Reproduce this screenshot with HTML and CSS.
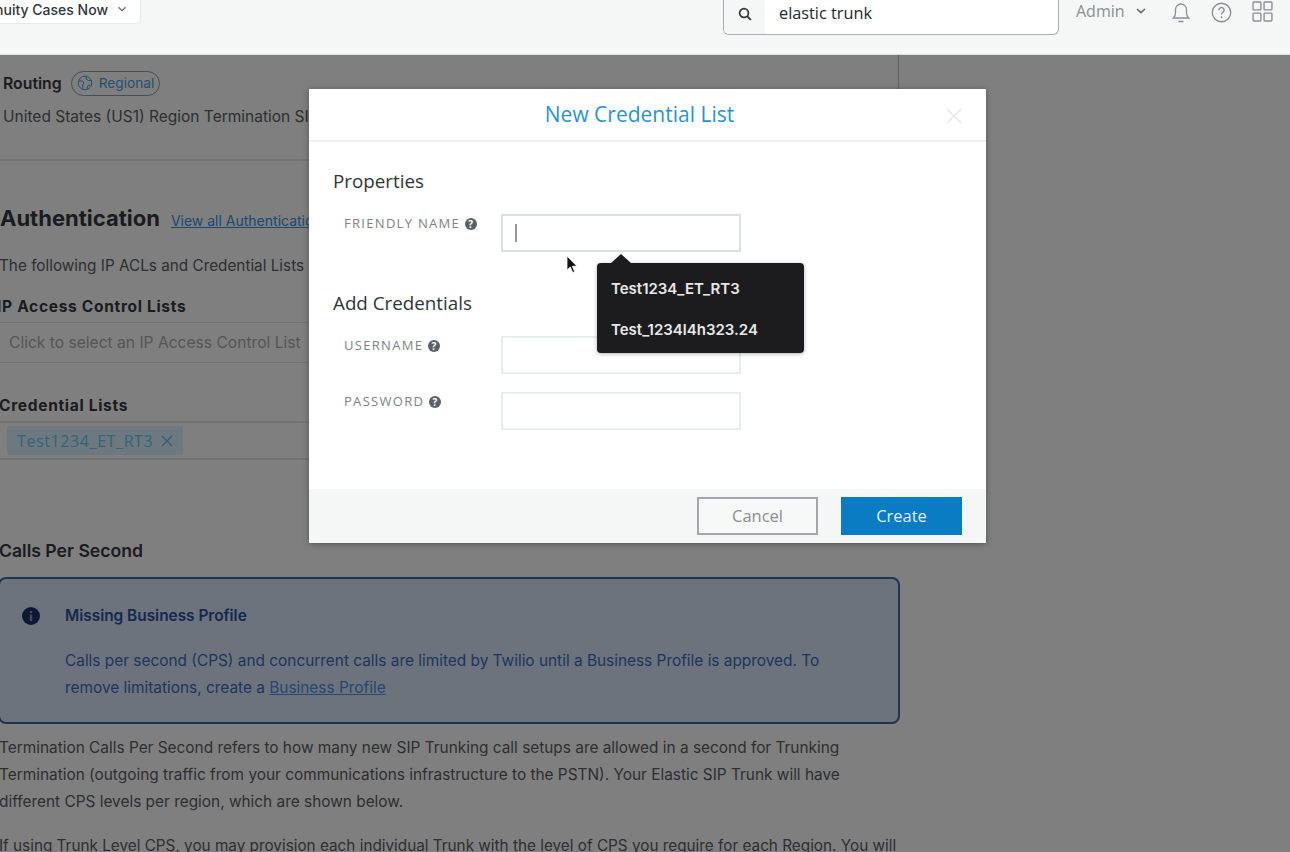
FILE: index.html
```html
<!DOCTYPE html>
<html lang="en">
<head>
    <meta charset="UTF-8">
    <title>New Credential List</title>
    <link rel="stylesheet" href="styles.css">
</head>
<body>
    <header class="topbar">
        <button type="button" class="cases-btn">
            <span>Continuity Cases Now</span>
            <svg width="10" height="6" viewBox="0 0 10 6"><path d="M1.500 1.200 5 4.600l3.500-3.400" fill="none" stroke="#667" stroke-width="1.300"/></svg>
        </button>
        <div class="search">
            <span class="search-icon">
                <svg width="16" height="16" viewBox="0 0 16 16"><circle cx="7" cy="7" r="4.400" fill="none" stroke="#33393f" stroke-width="1.700"/><path d="m10.300 10.300 3.600 3.600" stroke="#33393f" stroke-width="1.900"/></svg>
            </span>
            <span class="search-text">elastic trunk</span>
        </div>
        <div class="account">
            <span>Admin</span>
            <svg width="10" height="6" viewBox="0 0 10 6"><path d="M1 1l4 3.600L9 1" fill="none" stroke="#666c72" stroke-width="1.600"/></svg>
        </div>
        <svg class="top-icon bell" width="18" height="21" viewBox="0 0 18 21"><path d="M1.500 16c1.500-1.500 2-3 2-5.500V7.500a5.500 5.500 0 0 1 11 0v3c0 2.500.5 4 2 5.500Z M6.500 19.500h5" fill="none" stroke="#8a8f94" stroke-width="1.300"/></svg>
        <svg class="top-icon help" width="21" height="21" viewBox="0 0 20 20"><circle cx="10" cy="10" r="8.800" fill="none" stroke="#8a8f94" stroke-width="1.300"/><path d="M7.500 7.800a2.500 2.500 0 1 1 3.800 2.100c-.9.600-1.300 1-1.300 2.100" fill="none" stroke="#8a8f94" stroke-width="1.300"/><circle cx="10" cy="14.500" r=".9" fill="#8a8f94"/></svg>
        <svg class="top-icon grid" width="21" height="21" viewBox="0 0 20 20"><g fill="none" stroke="#8a8f94" stroke-width="1.300"><rect x="1" y="1" width="7.500" height="7.500" rx=".8"/><rect x="11.500" y="1" width="7.500" height="7.500" rx=".8"/><rect x="1" y="11.500" width="7.500" height="7.500" rx=".8"/><rect x="11.500" y="11.500" width="7.500" height="7.500" rx=".8"/></g></svg>
    </header>

    <main class="content">
        <div class="routing-row">
            <b>Routing</b>
            <span class="region-pill">
                <svg width="16" height="16" viewBox="0 0 16 16"><g fill="none" stroke="#4a9fe0" stroke-width="1"><circle cx="8" cy="8" r="6.800"/><path d="M2 6h3.500l1.500 2-1.500 2 .5 3.500M9.500 1.500 9 4l2.500 1.500h3M10 14l.5-3 3-1"/></g></svg>
                Regional
            </span>
        </div>
        <p class="routing-text">United States (US1) Region Termination SIP URI</p>
        <hr class="divider">

        <div class="auth-head">
            <h2>Authentication</h2>
            <a href="#">View all Authentication</a>
        </div>
        <p class="auth-text">The following IP ACLs and Credential Lists</p>

        <h4 class="field-title ip-title">IP Access Control Lists</h4>
        <div class="placeholder">Click to select an IP Access Control List</div>

        <h4 class="field-title cred-title">Credential Lists</h4>
        <div class="chips">
            <span class="chip">Test1234_ET_RT3
                <svg width="12" height="12" viewBox="0 0 12 12"><path d="m1 1 10 10M11 1 1 11" stroke="#66b8e0" stroke-width="1.200"/></svg>
            </span>
        </div>

        <h3 class="cps-title">Calls Per Second</h3>
        <div class="notice">
            <svg class="notice-icon" width="18" height="18" viewBox="0 0 18 18"><circle cx="9" cy="9" r="9" fill="#1b3365"/><circle cx="9" cy="5" r="1.300" fill="#8a94a6"/><rect x="7.800" y="7.500" width="2.400" height="6.500" fill="#8a94a6"/></svg>
            <div>
                <h5>Missing Business Profile</h5>
                <p>Calls per second (CPS) and concurrent calls are limited by Twilio until a Business Profile is approved. To remove limitations, create a <a href="#">Business Profile</a></p>
            </div>
        </div>
        <p class="body-text">Termination Calls Per Second refers to how many new SIP Trunking call setups are allowed in a second for Trunking Termination (outgoing traffic from your communications infrastructure to the PSTN). Your Elastic SIP Trunk will have different CPS levels per region, which are shown below.</p>
        <p class="body-text body-last">If using Trunk Level CPS, you may provision each individual Trunk with the level of CPS you require for each Region. You will</p>
    </main>

    <div class="backdrop"></div>

    <section class="modal">
        <div class="modal-head">
            <h2>New Credential List</h2>
            <svg class="modal-close" width="16" height="16" viewBox="0 0 16 16"><path d="m1 1 14 14M15 1 1 15" stroke="#e6e8e8" stroke-width="1.500"/></svg>
        </div>
        <div class="modal-body">
            <h3>Properties</h3>
            <div class="form-row">
                <label>FRIENDLY NAME <i class="qmark">?</i></label>
                <div class="input input-active"><span class="caret"></span></div>
            </div>
            <h3 class="add-head">Add Credentials</h3>
            <div class="form-row">
                <label>USERNAME <i class="qmark">?</i></label>
                <div class="input"></div>
            </div>
            <div class="form-row password-row">
                <label>PASSWORD <i class="qmark">?</i></label>
                <div class="input"></div>
            </div>
        </div>
        <div class="modal-foot">
            <button type="button" class="btn-cancel">Cancel</button>
            <button type="button" class="btn-create">Create</button>
        </div>
        <div class="suggest">
            <div>Test1234_ET_RT3</div>
            <div>Test_1234l4h323.24</div>
        </div>
        <svg class="cursor" width="12" height="19" viewBox="0 0 12 19"><path d="M1 1v14l3.300-3 2.400 5.500 2-.9-2.400-5.300H11Z" fill="#111" stroke="#fff" stroke-width=".8"/></svg>
    </section>
</body>
</html>
```

FILE: styles.css
```css
* { box-sizing: border-box; }

html, body {
    margin: 0;
    height: 852px;
    overflow: hidden;
}

body {
    background-color: #fff;
    color: #35383e;
    font-family: 'Inter', sans-serif;
    position: relative;
}

/* top bar sits above the dimmed page */
.topbar {
    position: relative;
    z-index: 3;
    height: 55px;
    background-color: #f5f7f7;
    border-bottom: 1px solid #dcdfe0;
    display: flex;
    align-items: flex-start;
}

.cases-btn {
    flex: none;
    width: 180px;
    height: 30px;
    margin: -6px 0 0 -39px;
    padding: 0 13px 0 0;
    background: #fff;
    border: 1px solid #e7eaea;
    border-radius: 5px;
    display: flex;
    align-items: center;
    justify-content: flex-end;
    gap: 9px;
    font-family: 'Inter', sans-serif;
    font-size: 14px;
    font-weight: 500;
    color: #30363c;
    white-space: nowrap;
}

.cases-btn svg { flex: none; }

.search {
    flex: none;
    width: 336px;
    height: 35px;
    margin: 0 0 0 582px;
    background: #fff;
    border: 1px solid #a9aeb2;
    border-top: 0;
    border-radius: 0 0 6px 6px;
    display: flex;
    overflow: hidden;
}

.search-icon {
    width: 41px;
    background: #f5f7f7;
    display: flex;
    align-items: center;
    justify-content: center;
    padding-bottom: 7px;
}

.search-text {
    padding: 2px 0 0 14px;
    font-family: 'Open Sans', sans-serif;
    font-size: 16.300px;
    color: #22272c;
}

.account {
    margin: 0 0 0 17px;
    height: 22px;
    display: flex;
    align-items: center;
    gap: 11px;
    font-family: 'Open Sans', sans-serif;
    font-size: 16px;
    color: #8a8f94;
}

.top-icon { flex: none; }
.bell { margin: 2px 0 0 26px; }
.help { margin: 2px 0 0 21px; }
.grid { margin: 1px 0 0 20px; }

.content {
    position: relative;
    width: 899px;
    height: 797px;
    padding: 18px 0 0 0;
    font-size: 15.400px;
    color: #5a5e64;
}

/* only the stub above the modal shows in the dimmed page */
.content::after {
    content: "";
    position: absolute;
    right: 0;
    top: 0;
    width: 1px;
    height: 36px;
    background: #c4c4c4;
}

.content p { margin: 0; }

.routing-row {
    display: flex;
    align-items: center;
    gap: 9px;
    padding-left: 3px;
    height: 20px;
    color: #35383e;
}

.routing-row b { font-weight: 600; font-size: 15.800px; }

.region-pill {
    height: 25px;
    width: 89px;
    padding: 0 0 0 5px;
    border: 1px solid #8a9db2;
    border-radius: 13px;
    display: inline-flex;
    align-items: center;
    gap: 6px;
    font-size: 13.700px;
    color: #4a9fe0;
}

.routing-text {
    padding: 14px 0 0 3px;
    font-size: 15.500px;
    line-height: 20px;
    white-space: nowrap;
}

.divider {
    margin: 32px 0 0 0;
    border: 0;
    border-top: 2px solid #e4e4e4;
}

.auth-head {
    margin-top: 43px;
    display: flex;
    align-items: baseline;
    gap: 11px;
}

.auth-head h2 {
    margin: 0;
    font-size: 22px;
    line-height: 28px;
    font-weight: 700;
    color: #35383e;
}

.auth-head a {
    font-size: 14px;
    color: #3a90e0;
}

.content .auth-text {
    margin: 24px 0 0 -1px;
    font-size: 15.300px;
    line-height: 20px;
    white-space: nowrap;
}

.field-title {
    margin: 0;
    color: #35383e;
    font-size: 15.500px;
    line-height: 20px;
    font-weight: 700;
    letter-spacing: 0.7px;
    white-space: nowrap;
}

.ip-title { margin: 21px 0 0 -3px; }
.cred-title { margin: 33px 0 0 -1px; }

.placeholder {
    margin-top: 5px;
    padding-left: 9px;
    height: 41px;
    display: flex;
    align-items: center;
    color: #ababab;
    font-size: 15.600px;
    border-top: 1px solid #e6e6e6;
    border-bottom: 1px solid #e6e6e6;
    white-space: nowrap;
}

.chips {
    margin-top: 5px;
    height: 39px;
    border-top: 2px solid #e4e4e4;
    border-bottom: 2px solid #e4e4e4;
    padding: 3px 0 0 7px;
}

.chip {
    display: inline-flex;
    align-items: center;
    gap: 8px;
    height: 29px;
    padding: 0 10px;
    background: #daf2ff;
    border-radius: 3px;
    font-size: 16px;
    letter-spacing: 0.6px;
    color: #66c8f0;
    font-family: 'Open Sans', sans-serif;
}

.cps-title {
    margin: 79px 0 0 -1px;
    color: #35383e;
    font-size: 17.600px;
    line-height: 24px;
    font-weight: 600;
}

.notice {
    margin: 14px 0 0 -2px;
    width: 902px;
    height: 147px;
    padding: 27px 20px 0 22px;
    background: #d8e6fa;
    border: 2px solid #3f689f;
    border-radius: 8px;
    display: flex;
    gap: 25px;
}

.notice-icon { flex: none; margin-top: 1px; }

.notice h5 {
    margin: 0;
    color: #2c50a0;
    font-size: 15.400px;
    line-height: 20px;
    font-weight: 600;
}

.content .notice p {
    margin-top: 21px;
    max-width: 775px;
    font-size: 15.400px;
    line-height: 27px;
    color: #3c6cb8;
}

.notice a { color: #4a90e0; }

.content .body-text {
    margin: 10px 0 0 -1px;
    line-height: 27px;
}

.content .body-text.body-last {
    margin-top: 17px;
    font-size: 15.300px;
    white-space: nowrap;
}

.backdrop {
    position: absolute;
    inset: 0;
    z-index: 1;
    background: rgba(0, 0, 0, 0.5);
}

.modal {
    position: absolute;
    z-index: 2;
    left: 309px;
    top: 89px;
    width: 677px;
    height: 454px;
    background: #fff;
    box-shadow: 0 1px 6px rgba(0, 0, 0, 0.35);
    display: flex;
    flex-direction: column;
    font-family: 'Open Sans', sans-serif;
}

.modal-head {
    height: 53px;
    padding: 0 16px 2px 0;
    border-bottom: 2px solid #eff1f1;
    display: flex;
    align-items: center;
    justify-content: center;
    position: relative;
}

.modal-head h2 {
    margin: 0;
    font-size: 21px;
    font-weight: 400;
    color: #2a93d5;
}

.modal-close {
    position: absolute;
    right: 24px;
    top: 19px;
}

.modal-body {
    flex: 1;
    padding: 27px 0 0 24px;
}

.modal-body h3 {
    margin: 0;
    font-size: 18.800px;
    line-height: 24px;
    font-weight: 400;
    color: #2f3439;
}

.modal-body .add-head { margin-top: 39px; }

.form-row {
    margin-top: 21px;
    display: flex;
}

.form-row label {
    width: 169px;
    padding: 0 0 0 11px;
    font-size: 13px;
    line-height: 18px;
    letter-spacing: 1.300px;
    color: #7d8286;
    white-space: nowrap;
}

.qmark {
    display: inline-block;
    width: 12px;
    height: 12px;
    border-radius: 50%;
    background: #5a6066;
    color: #fff;
    font-style: normal;
    font-size: 10px;
    line-height: 12px;
    text-align: center;
    letter-spacing: 0;
    font-weight: 700;
}

.input {
    width: 240px;
    height: 38px;
    margin-left: -1px;
    border: 2px solid #e9ecec;
    display: flex;
    align-items: center;
    padding-left: 12px;
}

.input-active { border-color: #dcdfdf; }

.caret {
    width: 2px;
    height: 18px;
    background: #999;
}

.form-row.password-row { margin-top: 18px; }

.modal-foot {
    height: 54px;
    background: #f5f6f6;
    display: flex;
    justify-content: flex-end;
    align-items: flex-start;
    gap: 23px;
    padding: 8px 24px 0 0;
}

.modal-foot button {
    width: 121px;
    height: 38px;
    padding: 0 0 2px 0;
    font-family: 'Open Sans', sans-serif;
    font-size: 16.500px;
}

.btn-cancel {
    background: #f7f8f8;
    border: 2px solid #a4a7a9;
    color: #8b8f92;
}

.btn-create {
    background: #0a7cc4;
    border: 0;
    color: #dff2fc;
}

/* autofill popup over the form */
.suggest {
    position: absolute;
    left: 288px;
    top: 174px;
    width: 207px;
    height: 90px;
    padding: 5px 14px;
    background: #1c1c1e;
    border-radius: 4px;
    box-shadow: 0 1px 4px rgba(0, 0, 0, 0.3);
    font-family: 'Inter', sans-serif;
    font-size: 15px;
    font-weight: 600;
    line-height: 41px;
    color: #e8e8e8;
}

.suggest::before {
    content: "";
    position: absolute;
    left: 14px;
    top: -9px;
    border-left: 10px solid transparent;
    border-right: 10px solid transparent;
    border-bottom: 9px solid #1c1c1e;
}

.cursor {
    position: absolute;
    left: 257px;
    top: 166px;
}
```
